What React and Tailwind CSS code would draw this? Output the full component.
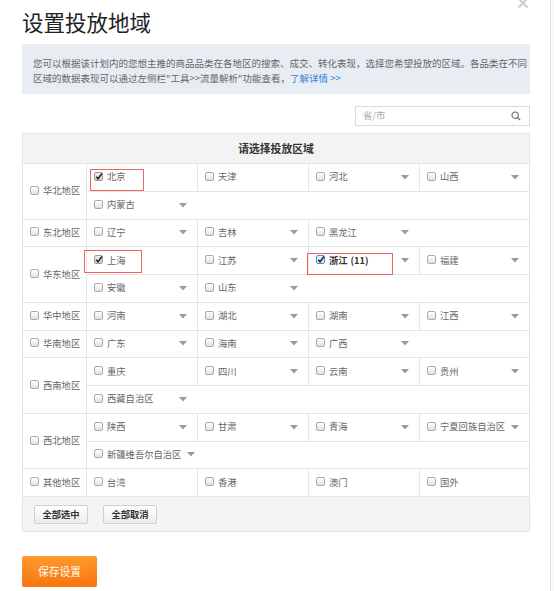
import React from "react";

const regions = [
  {
    name: "华北地区",
    rows: [
      [{ n: "北京", c: true, mark: "bj" }, { n: "天津" }, { n: "河北", d: true }, { n: "山西", d: true }],
      [{ n: "内蒙古", d: true }],
    ],
  },
  {
    name: "东北地区",
    rows: [[{ n: "辽宁", d: true }, { n: "吉林", d: true }, { n: "黑龙江", d: true }]],
  },
  {
    name: "华东地区",
    rows: [
      [
        { n: "上海", c: true, mark: "sh" },
        { n: "江苏", d: true },
        { n: "浙江", count: "(11)", c: true, focus: true, mark: "zj", d: true },
        { n: "福建", d: true },
      ],
      [{ n: "安徽", d: true }, { n: "山东", d: true }],
    ],
  },
  {
    name: "华中地区",
    rows: [[{ n: "河南", d: true }, { n: "湖北", d: true }, { n: "湖南", d: true }, { n: "江西", d: true }]],
  },
  {
    name: "华南地区",
    rows: [[{ n: "广东", d: true }, { n: "海南", d: true }, { n: "广西", d: true }]],
  },
  {
    name: "西南地区",
    rows: [
      [{ n: "重庆" }, { n: "四川", d: true }, { n: "云南", d: true }, { n: "贵州", d: true }],
      [{ n: "西藏自治区", d: true }],
    ],
  },
  {
    name: "西北地区",
    rows: [
      [{ n: "陕西", d: true }, { n: "甘肃", d: true }, { n: "青海", d: true }, { n: "宁夏回族自治区", d: true }],
      [{ n: "新疆维吾尔自治区", d: true }],
    ],
  },
  {
    name: "其他地区",
    rows: [[{ n: "台湾" }, { n: "香港" }, { n: "澳门" }, { n: "国外" }]],
  },
];

const cellWidth = ["min-w-[110px]", "w-[111px] border-l", "w-[111px] border-l", "flex-1 border-l"];

const marks = {
  bj: "left-[3px] top-[5px] w-[54px] h-[22px]",
  sh: "left-[-3px] top-[3px] w-[58px] h-[23px]",
  zj: "left-[-2px] top-[6px] w-[86px] h-[22px]",
};

function Check({ checked, focus }) {
  return (
    <span
      className={
        "relative inline-flex w-[9px] h-[9px] shrink-0 -translate-y-[1px] rounded-[2px] border bg-gradient-to-b " +
        (focus
          ? "border-[#4a90d9] from-[#eaf3fc] to-[#cfe2f6]"
          : checked
          ? "border-[#9a9a9a] from-[#f0f0f0] to-[#cfcfcf]"
          : "border-[#a9a9a9] from-white to-[#e2e2e2]")
      }
    >
      {checked && (
        <svg viewBox="0 0 10 10" className="absolute left-[0px] top-[-1px] w-[8px] h-[9px]">
          <path d="M1.5 5.2 L3.8 7.8 L8.6 1.2" fill="none" stroke="#222" strokeWidth="1.8" />
        </svg>
      )}
    </span>
  );
}

function Caret() {
  return (
    <svg viewBox="0 0 8 5" className="w-[8px] h-[5px] shrink-0 ml-auto mr-[10px]">
      <path d="M0 0 L8 0 L4 4.5 Z" fill="#9b9b9b" />
    </svg>
  );
}

function Province({ p, idx }) {
  return (
    <div className={"relative flex items-center border-[#e5e5e5] pl-[7px] " + cellWidth[idx]}>
      <Check checked={p.c} focus={p.focus} />
      <span className={"ml-[4px] whitespace-nowrap " + (p.count ? "text-[#333] font-semibold" : "text-[#666]")}>
        {p.n}
        {p.count && <span className="ml-[3px]">{p.count}</span>}
      </span>
      {p.d && <span className="ml-auto pl-[6px] flex"><Caret /></span>}
      {p.mark && <span className={"absolute border border-[#ef6262] " + marks[p.mark]} />}
    </div>
  );
}

export default function App() {
  return (
    <div
      className="w-[554px] h-[591px] flex bg-white overflow-hidden"
      style={{ fontFamily: '"Noto Sans CJK SC", "Noto Sans", sans-serif' }}
    >
      <div className="relative w-[550px] pl-[22px] pr-[20px] flex flex-col">
        <span className="absolute right-[21px] top-[-3px]">
          <svg viewBox="0 0 12 12" className="w-[12px] h-[12px]">
            <path d="M1.5 1.5 L10.5 10.5 M10.5 1.5 L1.5 10.5" stroke="#cdcdcd" strokeWidth="2" />
          </svg>
        </span>

        <div className="h-[44px] flex items-center">
          <h1 className="text-[21.5px] leading-none text-[#222]">设置投放地域</h1>
        </div>

        <div className="h-[50px] bg-[#e7edf3] pl-[11px] pt-[12px] text-[9.5px] leading-[15px] text-[#666] whitespace-nowrap">
          您可以根据该计划内的您想主推的商品品类在各地区的搜索、成交、转化表现，选择您希望投放的区域。各品类在不同
          <br />
          区域的数据表现可以通过左侧栏"工具&gt;&gt;流量解析"功能查看，
          <span className="text-[#2f7fd8]">了解详情 &gt;&gt;</span>
        </div>

        <div className="self-end mt-[12px] w-[175px] h-[20px] border border-[#dcdcdc] flex items-center pl-[7px] pr-[8px]">
          <span className="text-[9.3px] text-[#aaa]">省/市</span>
          <svg viewBox="0 0 12 12" className="ml-auto w-[10px] h-[10px]">
            <circle cx="5" cy="5" r="3.8" fill="none" stroke="#666" strokeWidth="1.3" />
            <path d="M7.8 7.8 L11 11" stroke="#666" strokeWidth="1.4" />
          </svg>
        </div>

        <div className="mt-[7px] w-[508px] border border-[#e5e5e5] text-[9.3px]">
          <div className="h-[30px] bg-[#f3f3f3] border-b border-[#e5e5e5] flex items-center justify-center">
            <span className="text-[10.8px] font-bold text-[#333]">请选择投放区域</span>
          </div>

          {regions.map((r) => (
            <div
              key={r.name}
              className={
                "flex border-b border-[#e5e5e5] " +
                (r.rows.length === 2 ? "h-[55.5px]" : "h-[27.75px]")
              }
            >
              <div className="w-[64px] shrink-0 border-r border-[#e5e5e5] flex items-center pl-[7px]">
                <Check />
                <span className="ml-[4px] text-[#666] whitespace-nowrap">{r.name}</span>
              </div>
              <div className="flex-1 flex flex-col">
                {r.rows.map((row, i) => (
                  <div key={i} className={"flex-1 flex " + (i > 0 ? "border-t border-[#e5e5e5]" : "")}>
                    {row.map((p, idx) => (
                      <Province key={p.n} p={p} idx={idx} />
                    ))}
                  </div>
                ))}
              </div>
            </div>
          ))}

          <div className="h-[34px] bg-[#f4f4f4] flex items-start pt-[8px] pl-[11px] gap-[15px]">
            <button className="w-[54px] h-[19px] rounded-[2px] border border-[#cfcfcf] bg-gradient-to-b from-white to-[#ececec] text-[9.3px] font-bold text-[#333] flex items-center justify-center">
              全部选中
            </button>
            <button className="w-[54px] h-[19px] rounded-[2px] border border-[#cfcfcf] bg-gradient-to-b from-white to-[#ececec] text-[9.3px] font-bold text-[#333] flex items-center justify-center">
              全部取消
            </button>
          </div>
        </div>

        <button className="mt-[24px] w-[75px] h-[31px] rounded-[2px] bg-gradient-to-b from-[#ff9a2c] to-[#f7740b] text-white text-[10.8px] flex items-center justify-center">
          保存设置
        </button>
      </div>
      <div className="w-px h-full bg-[#e3e3e3]" />
      <div className="flex-1 h-full bg-[#f8f8f8]" />
    </div>
  );
}
